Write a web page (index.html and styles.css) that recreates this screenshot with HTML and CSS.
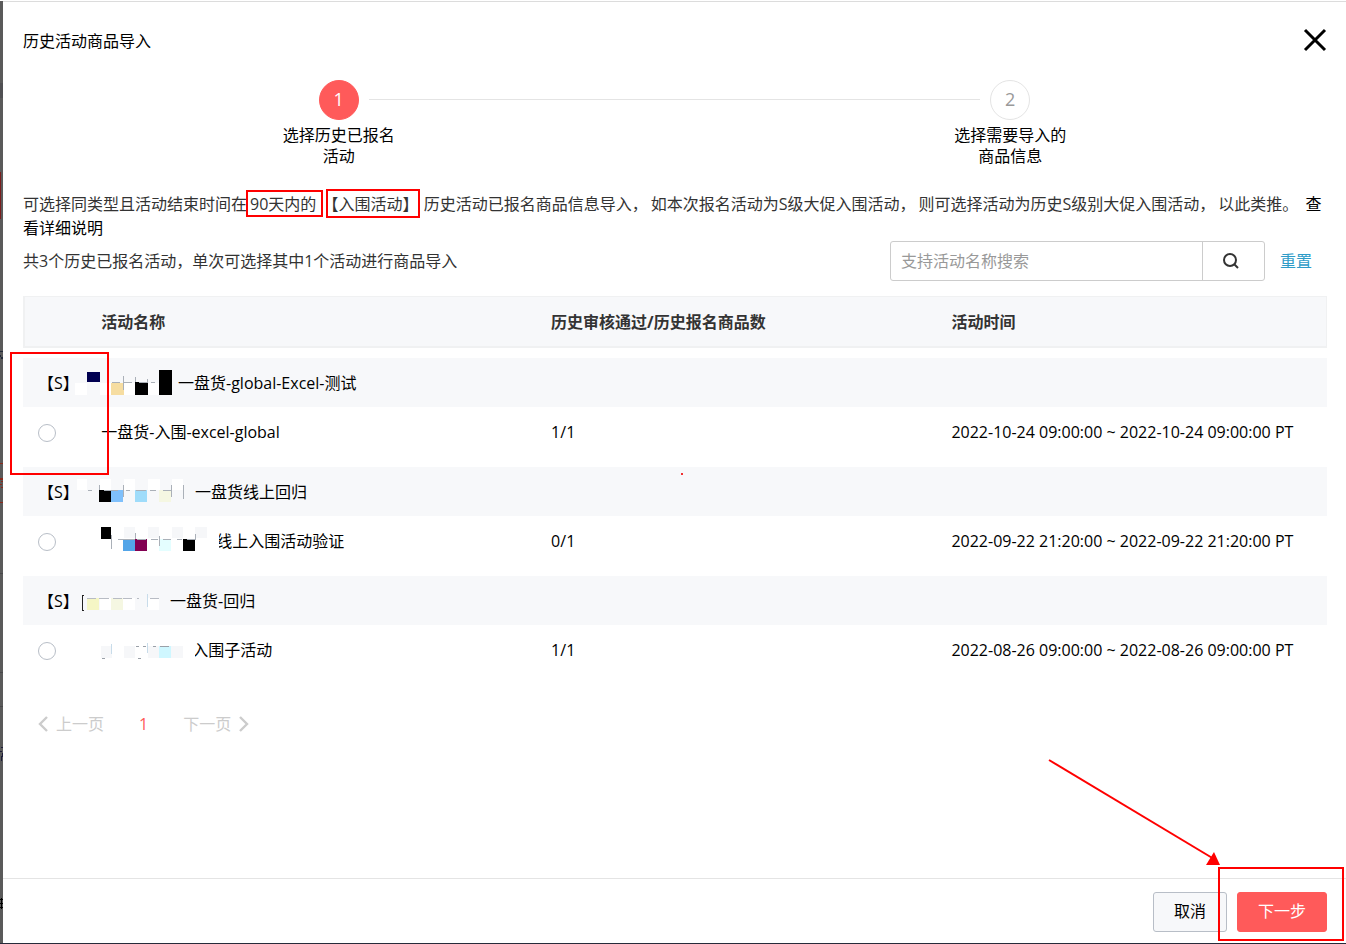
FILE: index.html
```html
<!DOCTYPE html>
<html lang="zh-CN">
<head>
<meta charset="utf-8">
<meta name="viewport" content="width=device-width, initial-scale=1">
<title>历史活动商品导入</title>
<link rel="stylesheet" href="styles.css">
</head>
<body>
<div class="page">
  <div class="backdrop" aria-hidden="true">
    <svg class="backdrop-marks" width="3" height="943" viewBox="0 0 3 943" shape-rendering="crispEdges">
      <rect y="82" width="3" height="15" fill="#505053"/>
      <rect y="171" width="1" height="47" fill="#7a1d1d"/>
      <path d="M0 350h3v1h-3zM0 354h1v2h-1zM1 356h2v2h-2z" fill="#222a3a"/>
      <path d="M0 462h3v1h-3zM0 501h3v1h-3z" fill="#8a2a1c"/>
      <path d="M0 477h3v2h-3zM1 480h2v1h-2zM0 483h2v1h-2zM1 486h2v1h-2z" fill="#8a2a1c"/>
      <path d="M0 572h3v1h-3zM0 671h3v1h-3zM0 705h3v1h-3z" fill="#48484a"/>
      <path d="M1 746h2v1h-2zM0 750h2v1h-2zM2 752h1v4h-1zM1 755h1v5h-1z" fill="#1c1c3a"/>
      <path d="M0 898h3v1h-3zM0 902h3v1h-3zM0 906h3v1h-3zM1 897h1v11h-1z" fill="#000"/>
    </svg>
  </div>
  <main class="dialog" role="dialog" aria-labelledby="dialog-title">
    <header class="dialog-header">
      <h1 id="dialog-title" class="dialog-title">历史活动商品导入</h1>
      <button class="close" type="button" aria-label="关闭">
        <svg width="24" height="24" viewBox="0 0 24 24"><path d="M2 2L22 22M22 2L2 22" stroke="#000" stroke-width="3" fill="none"/></svg>
      </button>
    </header>

    <ol class="steps">
      <li class="step step-active"><span class="step-dot">1</span><span class="step-label">选择历史已报名活动</span></li>
      <li class="step"><span class="step-dot">2</span><span class="step-label">选择需要导入的商品信息</span></li>
    </ol>

    <div class="content">
      <p class="tips"><span class="clause">可选择同类型且活动结束时间在</span><span class="mark">90天内的</span> <span class="mark mark-type">【入围活动】</span> <span class="clause">历史活动已报名商品信息导入，</span><span class="clause">如本次报名活动为S级大促入围活动，</span><span class="clause">则可选择活动为历史S级别大促入围活动，</span><span class="clause">以此类推。</span> <a class="detail" href="#">查看详细说明</a></p>

      <div class="toolbar">
        <p class="summary">共3个历史已报名活动，单次可选择其中1个活动进行商品导入</p>
        <form class="search">
          <input class="search-input" type="text" placeholder="支持活动名称搜索" aria-label="支持活动名称搜索">
          <button class="search-button" type="button" aria-label="搜索">
            <svg width="18" height="18" viewBox="0 0 18 18" fill="none" stroke="#333" stroke-width="2"><circle cx="8" cy="8" r="6"/><path d="M12 12L16 16"/></svg>
          </button>
        </form>
        <a class="reset" href="#">重置</a>
      </div>

      <div class="table-wrap">
        <table class="table">
          <colgroup><col class="col-pick"><col class="col-name"><col class="col-count"><col></colgroup>
          <thead>
            <tr><th></th><th>活动名称</th><th>历史审核通过/历史报名商品数</th><th>活动时间</th></tr>
          </thead>
          <tbody>
            <tr class="spacer"><td colspan="4"></td></tr>
            <tr class="group"><td colspan="4"><div class="line"><span class="level">【S】</span>
              <svg width="103" height="32" viewBox="75 366 103 32" shape-rendering="crispEdges">
                <path d="M75 382h12v12h-12zM100 382h12v12h-12zM124 382h11v12h-11zM148 382h11v12h-11z" fill="#fff"/>
                <rect x="87" y="371" width="13" height="10" fill="#000050"/>
                <rect x="111" y="382" width="13" height="12" fill="#f6dda1"/>
                <path d="M135 381h13v13h-13zM159 369h13v25h-13z" fill="#000"/>
                <path d="M112 381h8M123 375v14M124 381h8M135 376v5M139 381h9M147 378v3M151 381h4" stroke="#aab0b8"/>
              </svg><span>一盘货-global-Excel-测试</span></div></td></tr>
            <tr class="item"><td class="pick"><input class="radio" type="radio" name="activity" aria-labelledby="a1"></td><td id="a1">一盘货-入围-excel-global</td><td>1/1</td><td>2022-10-24 09:00:00 ~ 2022-10-24 09:00:00 PT</td></tr>
            <tr class="group"><td colspan="4"><div class="line"><span class="level">【S】</span>
              <svg width="120" height="32" viewBox="75 475 120 32" shape-rendering="crispEdges">
                <path d="M77 478h10v11h-10zM100 478h11v11h-11zM124 478h11v11h-11zM148 478h12v11h-12zM172 478h11v11h-11z" fill="#fff"/>
                <rect x="99" y="489" width="12" height="12" fill="#000"/>
                <rect x="111" y="489" width="12" height="12" fill="#7fc0fb"/>
                <rect x="135" y="489" width="12" height="12" fill="#9fdcfa"/>
                <rect x="159" y="489" width="12" height="12" fill="#f5f7e2"/>
                <path d="M88 489h4M99 484v5M104 489h14M123 484v12M126 489h4M136 489h10M150 489h6M163 489h8M171 484v12M183 484v14" stroke="#aab0b8"/>
              </svg><span>一盘货线上回归</span></div></td></tr>
            <tr class="item"><td class="pick"><input class="radio" type="radio" name="activity" aria-labelledby="a2"></td><td id="a2"><div class="line">
              <svg class="mosaic-over" width="118" height="32" viewBox="101 523 118 32" shape-rendering="crispEdges">
                <path d="M124 525h11v11h-11zM148 525h11v11h-11zM172 525h11v11h-11zM195 525h12v11h-12z" fill="#f6f7f9"/>
                <path d="M101 525h10v12h-10zM183 537h12v12h-12z" fill="#000"/>
                <rect x="123" y="537" width="12" height="12" fill="#53a5e8"/>
                <rect x="135" y="537" width="12" height="12" fill="#820052"/>
                <rect x="159" y="537" width="12" height="12" fill="#e4feff"/>
                <rect x="214" y="525" width="5" height="28" fill="#fff"/>
                <path d="M111 533v14M118 537h17M135 531v6M137 537h9M151 537h7M159 534v10M163 537h8M177 537h5M187 537h9M195 532v5" stroke="#aab0b8"/>
              </svg><span>线上入围活动验证</span></div></td><td>0/1</td><td>2022-09-22 21:20:00 ~ 2022-09-22 21:20:00 PT</td></tr>
            <tr class="group"><td colspan="4"><div class="line"><span class="level">【S】</span>
              <svg width="95" height="32" viewBox="75 584 95 32" shape-rendering="crispEdges">
                <rect x="87" y="597" width="12" height="12" fill="#f5f6c5"/>
                <rect x="111" y="597" width="12" height="12" fill="#f5f7e2"/>
                <path d="M100 597h11v12h-11zM123 597h12v12h-12zM148 597h11v12h-11z" fill="#fff"/>
                <path d="M84 594h-2v15h2" stroke="#222" fill="none"/>
                <path d="M87 597h9M99 597h10M113 597h9M123 597h9M137 597h2M150 597h9" stroke="#b8bcc4"/>
                <path d="M147 593v13" stroke="#c8dcea"/>
              </svg><span>一盘货-回归</span></div></td></tr>
            <tr class="item"><td class="pick"><input class="radio" type="radio" name="activity" aria-labelledby="a3"></td><td id="a3"><div class="line">
              <svg class="mosaic-over" width="94" height="32" viewBox="101 633 94 32" shape-rendering="crispEdges">
                <path d="M101 645h11v12h-11zM124 645h11v12h-11zM148 645h11v12h-11zM171 645h12v12h-12z" fill="#f6f7f9"/>
                <rect x="159" y="645" width="12" height="12" fill="#cff7ff"/>
                <rect x="189" y="635" width="6" height="28" fill="#fff"/>
                <path d="M102 657h3M136 645h3M138 657h3M143 645h3M153 645h3M160 645h9" stroke="#9aa0a8"/>
                <path d="M111 643v10M147 642v10" stroke="#c8dcea"/>
              </svg><span>入围子活动</span></div></td><td>1/1</td><td>2022-08-26 09:00:00 ~ 2022-08-26 09:00:00 PT</td></tr>
          </tbody>
        </table>
        <span class="callout callout-radio"></span>
        <span class="speck"></span>
      </div>

      <nav class="pager" aria-label="分页">
        <button class="page-link" type="button" disabled><svg width="10" height="16" viewBox="0 0 10 16"><path d="M9 1L2 8L9 15" stroke="#ccc" stroke-width="2.4" fill="none"/></svg>上一页</button>
        <button class="page-link page-current" type="button">1</button>
        <button class="page-link" type="button" disabled>下一页<svg width="10" height="16" viewBox="0 0 10 16"><path d="M1 1L8 8L1 15" stroke="#ccc" stroke-width="2.4" fill="none"/></svg></button>
      </nav>
    </div>

    <footer class="dialog-footer">
      <button class="button" type="button">取消</button>
      <button class="button button-primary" type="button">下一步</button>
      <span class="callout callout-next"></span>
      <svg class="arrow" width="174" height="110" viewBox="0 0 174 110"><path d="M1 2L166 101" stroke="#f00" stroke-width="2" fill="none"/><path d="M166 94L172 107H158Z" fill="#f00"/></svg>
    </footer>
  </main>
</div>
</body>
</html>
```

FILE: styles.css
```css
* { box-sizing: border-box; }

body {
  margin: 0;
  font-family: "Open Sans", "Noto Sans CJK SC", sans-serif;
  font-size: 16px;
  line-height: 24px;
  color: #000;
  background: #fff;
}

button, input { font: inherit; color: inherit; }
button { cursor: pointer; }
a { text-decoration: none; }
svg { display: block; flex: none; }

.page {
  display: grid;
  grid-template-columns: 3px minmax(0, 1fr);
  min-height: 100vh;
  border-top: 1px solid #fff;
  border-bottom: 1px solid #272b3a;
  overflow: hidden;
}

.backdrop { background: #5a5a5a; position: relative; }
.backdrop-marks { position: absolute; top: 0; left: 0; }

.dialog {
  display: flex;
  flex-direction: column;
  border-top: 1px solid #dcdcdc;
}

.dialog-header {
  display: flex;
  align-items: flex-start;
  justify-content: space-between;
  padding: 23px 19px 0 20px;
}
.dialog-title { margin: 0; font-size: 16px; font-weight: 400; line-height: 32px; }
.close { margin-top: 3px; padding: 0; border: 0; background: none; }

.steps {
  display: grid;
  grid-template-columns: 1fr 1fr;
  margin: 23px 0 0;
  padding: 0;
  list-style: none;
}
.step {
  position: relative;
  display: flex;
  flex-direction: column;
  align-items: center;
  gap: 5px;
}
.step-active::after {
  content: "";
  position: absolute;
  top: 19px;
  left: calc(50% + 30px);
  width: calc(100% - 60px);
  border-top: 1px solid #e4e4e4;
}
.step-dot {
  width: 40px;
  height: 40px;
  border: 1px solid #e4e4e4;
  border-radius: 50%;
  font-size: 18px;
  line-height: 36px;
  text-align: center;
  color: #999;
}
.step-active .step-dot { background: #ff5a5a; border-color: #ff5a5a; color: #fff; }
.step-label { width: 120px; line-height: 21px; text-align: center; }

.content { flex: 1; padding: 25px 19px 0 20px; }

.tips { margin: 0; color: #333; }
.clause { margin-right: 3px; }
.mark { position: relative; }
.mark::after {
  content: "";
  position: absolute;
  inset: -3px -7px -2px -4px;
  border: 2px solid #f00;
}
.mark-type { margin: 0 1px 0 2px; }
.mark-type::after { inset: -4px -1px -3px 4px; }
.detail { color: #000; }

.toolbar { display: flex; align-items: center; margin-top: 1px; padding-right: 15px; }
.summary { flex: 1; margin: 0; color: #333; }
.search {
  display: flex;
  width: 375px;
  height: 40px;
  margin-right: 15px;
  border: 1px solid #ccc;
  border-radius: 3px;
}
.search-input { flex: 1; min-width: 0; padding: 0 10px; border: 0; background: none; }
.search-input::placeholder { color: #999; opacity: 1; }
.search-button {
  display: grid;
  place-items: center;
  width: 62px;
  padding: 0 4px 0 0;
  border: 0;
  border-left: 1px solid #ccc;
  background: none;
}
.reset { color: #2e9cc8; }

.table-wrap { position: relative; margin-top: 15px; }
.table { width: 100%; table-layout: fixed; border-collapse: separate; border-spacing: 0; }
.col-pick { width: 6%; }
.col-name { width: 34.5%; }
.col-count { width: 30.7%; }
.table th, .table td { padding: 0; text-align: left; }
.table th {
  height: 52px;
  color: #333;
  background: #f7f8fa;
  border: solid #f0f1f2;
  border-width: 1px 0 2px;
}
.table th:first-child { border-left-width: 2px; }
.table th:last-child { border-right-width: 1px; }
.spacer td { height: 10px; }
.table .group td { height: 49px; padding-left: 15px; background: #f7f8fa; }
.table .item td { height: 60px; padding-bottom: 10px; }
.line { display: flex; align-items: center; height: 24px; }
.level { width: 37px; white-space: nowrap; }
.mosaic-over { position: relative; margin-right: -3px; }
.table .item .pick { padding: 0 0 8px 15px; }
.radio {
  display: block;
  appearance: none;
  width: 18px;
  height: 18px;
  margin: 0;
  border: 1px solid #b8bec7;
  border-radius: 50%;
  background: #fff;
}

.callout { position: absolute; border: 2px solid #f00; pointer-events: none; }
.callout-radio { top: 56px; left: -13px; width: 99px; height: 123px; }
.speck { position: absolute; top: 177px; left: 658px; width: 2px; height: 2px; background: #f03030; }

.pager { display: flex; align-items: center; gap: 35px; margin: 27px 0 24px 15px; }
.page-link {
  display: flex;
  align-items: center;
  gap: 8px;
  padding: 0;
  border: 0;
  background: none;
  color: #ccc;
}
.page-current { color: #ff5a5a; }

.dialog-footer {
  position: relative;
  display: flex;
  justify-content: flex-end;
  gap: 10px;
  padding: 13px 19px 11px;
  border-top: 1px solid #e4e4e4;
}
.button {
  height: 40px;
  padding: 0 20px 2px;
  border: 1px solid #b8bec7;
  border-radius: 3px;
  background: #f7f8fa;
}
.button-primary { border-color: #ff5a5a; background: #ff5a5a; color: #fff; }
.callout-next { right: 2px; bottom: 2px; width: 126px; height: 74px; }
.arrow { position: absolute; right: 124px; bottom: 75px; pointer-events: none; }
```
